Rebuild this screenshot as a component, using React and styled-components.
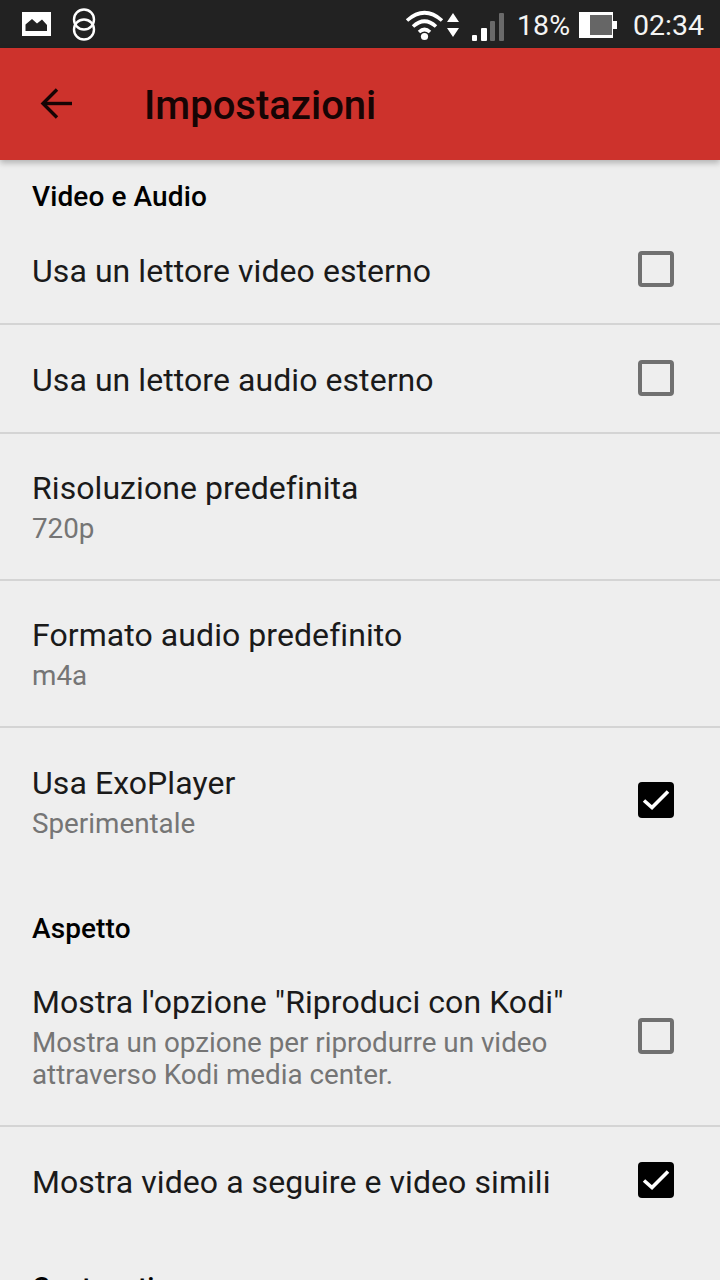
import React from "react";
import styled, { createGlobalStyle } from "styled-components";

const Global = createGlobalStyle`
  html, body { margin: 0; padding: 0; background: #eeeeee; }
  body { font-family: Roboto, "Noto Sans", sans-serif; overflow: hidden; }
`;
const Page = styled.div`
  width: 720px; height: 1280px; overflow: hidden; background: #eeeeee;
  display: flex; flex-direction: column;
`;
const StatusBar = styled.div`
  height: 48px; flex: none; background: #222222; display: flex; align-items: center;
  padding: 0 16px 0 22px; color: #fff; font-size: 28.5px; line-height: 48px;
`;
const StatusLeft = styled.div`display: flex; align-items: center; gap: 21px; flex: 1;`;
const StatusRight = styled.div`display: flex; align-items: center;`;
const StatusText = styled.span`margin: ${p => p.$m || 0}; padding-top: 3px; color: #f4f4f4;`;
const StatusIcon = styled.svg`flex: none; margin-left: ${p => p.$ml || 0}px; margin-top: ${p => p.$mt || 0}px;`;
const AppBar = styled.header`
  height: 112px; flex: none; background: #cd322c; display: flex; align-items: center;
  padding-left: 40px; box-shadow: 0 3px 6px rgba(0,0,0,.25); position: relative; z-index: 1;
`;
const BackIcon = styled.svg`flex: none; margin-top: -1px;`;
const Title = styled.h1`
  margin: 4px 0 0 72px; font-size: 40px; font-weight: 500; color: #160404; line-height: 108px;
`;
const List = styled.main`display: flex; flex-direction: column; padding-top: 17px;`;
const Heading = styled.div`
  padding: 0 32px; font-size: 28px; font-weight: 500; color: #000; line-height: 39px;
  letter-spacing: .1px; margin-top: ${p => p.$top || 0}px;
`;
const Row = styled.div`
  display: flex; align-items: center; padding: 0 46px 0 32px; height: ${p => p.$h}px;
  border-bottom: ${p => p.$line ? "2px solid #d4d4d4" : "0"}; box-sizing: border-box; flex: none;
`;
const RowText = styled.div`flex: 1; min-width: 0;`;
const RowTitle = styled.div`
  font-size: 32px; line-height: 40px; color: #1a1a1a; white-space: nowrap; letter-spacing: .07px;
  &:only-child { margin-top: 3px; }
`;
const RowSub = styled.div`font-size: 27.8px; line-height: 32px; color: #757575; margin-top: 5px;`;
const Box = styled.div`
  width: 36px; height: 36px; box-sizing: border-box; border-radius: 4px; flex: none;
  border: ${p => p.$on ? "0" : "4px solid #707070"}; background: ${p => p.$on ? "#000" : "transparent"};
  display: flex; align-items: center; justify-content: center; margin-top: ${p => p.$mt || 0}px;
`;

const Check = ({ on, mt }) => (
  <Box $on={on} $mt={mt}>
    {on && (
      <svg width="28" height="24" viewBox="0 0 28 24" fill="none">
        <path d="M2 12.5 L10 19.5 L26 3.5" stroke="#fff" strokeWidth="3.6" />
      </svg>
    )}
  </Box>
);

export default function App() {
  return (
    <Page>
      <Global />
      <StatusBar>
        <StatusLeft>
          <svg width="29" height="24" viewBox="0 0 29 24">
            <path fillRule="evenodd" fill="#fff" d="M0 0H29V24H0Z M3.5 19H25V13L20 7.5L15 11.5L10 7L3.5 12.5Z" />
          </svg>
          <svg width="24" height="33" viewBox="0 0 24 33" fill="none" stroke="#fff" strokeWidth="2.4">
            <ellipse cx="12" cy="11.5" rx="10" ry="10" />
            <ellipse cx="12" cy="21.5" rx="10" ry="10" />
          </svg>
        </StatusLeft>
        <StatusRight>
          <StatusIcon width="39" height="32" viewBox="0 0 39 32" fill="none" stroke="#fff" strokeWidth="3.6" $mt={2}>
            <path d="M2 11.5 Q19.5 -4 37 11.5" />
            <path d="M8 17.5 Q19.5 7 31 17.5" />
            <path d="M14 23 Q19.5 18 25 23" />
            <circle cx="19.5" cy="27.5" r="3.6" fill="#fff" stroke="none" />
          </StatusIcon>
          <StatusIcon width="12" height="24" viewBox="0 0 12 24" $ml={3} $mt={1}>
            <path fill="#fff" d="M6 0L12 9H0Z M0 15H12L6 24Z" />
          </StatusIcon>
          <StatusIcon width="32" height="28" viewBox="0 0 32 28" $ml={13} $mt={6}>
            <rect x="0" y="22" width="5" height="6" rx="1" fill="#fff" />
            <rect x="9" y="15" width="6" height="13" rx="1" fill="#fff" />
            <rect x="18" y="8" width="5" height="20" rx="1" fill="#6a6a6a" />
            <rect x="27" y="0" width="5" height="28" rx="1" fill="#6a6a6a" />
          </StatusIcon>
          <StatusText $m="0 0 0 13px">18%</StatusText>
          <StatusIcon width="38" height="26" viewBox="0 0 38 26" $ml={9} $mt={2}>
            <path fill="#fff" d="M0 0H34V9H38V17H34V26H0Z" />
            <rect x="11" y="3" width="22" height="20" fill="#666" />
          </StatusIcon>
          <StatusText $m="0 0 0 16px">02:34</StatusText>
        </StatusRight>
      </StatusBar>
      <AppBar>
        <BackIcon width="32" height="32" viewBox="0 0 32 32" fill="none" stroke="#160404" strokeWidth="3.4">
          <path d="M32 15.5H3" />
          <path d="M17 1.5L3 15.5L17 29.5" />
        </BackIcon>
        <Title>Impostazioni</Title>
      </AppBar>
      <List>
        <Heading>Video e Audio</Heading>
        <Row $h={109} $line><RowText><RowTitle>Usa un lettore video esterno</RowTitle></RowText><Check mt={-2} /></Row>
        <Row $h={109} $line><RowText><RowTitle>Usa un lettore audio esterno</RowTitle></RowText><Check mt={-2} /></Row>
        <Row $h={147} $line>
          <RowText><RowTitle>Risoluzione predefinita</RowTitle><RowSub>720p</RowSub></RowText>
        </Row>
        <Row $h={147} $line>
          <RowText><RowTitle>Formato audio predefinito</RowTitle><RowSub>m4a</RowSub></RowText>
        </Row>
        <Row $h={146}>
          <RowText><RowTitle>Usa ExoPlayer</RowTitle><RowSub>Sperimentale</RowSub></RowText>
          <Check on mt={-2} />
        </Row>
        <Heading $top={35}>Aspetto</Heading>
        <Row $h={179} $line>
          <RowText>
            <RowTitle>Mostra l'opzione "Riproduci con Kodi"</RowTitle>
            <RowSub>Mostra un opzione per riprodurre un video<br />attraverso Kodi media center.</RowSub>
          </RowText>
          <Check mt={-2} />
        </Row>
        <Row $h={106}><RowText><RowTitle>Mostra video a seguire e video simili</RowTitle></RowText><Check on /></Row>
        <Heading $top={35}>Contenuti</Heading>
      </List>
    </Page>
  );
}
